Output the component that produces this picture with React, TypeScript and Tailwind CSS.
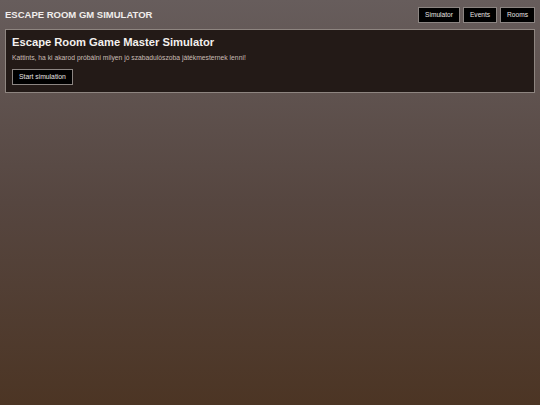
import React from "react";

const navItems = ["Simulator", "Events", "Rooms"];

const NavButton: React.FC<{ label: string }> = ({ label }) => (
  <button className="h-4 px-[6px] bg-black border border-[#8c8582] text-[6.6px] leading-none text-[#e8e4e2]">
    {label}
  </button>
);

const App: React.FC = () => {
  return (
    <div
      className="min-h-screen w-full bg-gradient-to-b from-[#675d5c] via-[#564640] to-[#4c3524] text-white"
      style={{ fontFamily: '"Liberation Sans", Arial, sans-serif' }}
    >
      <header className="flex items-center justify-between pl-[5px] pr-[5px] pt-[7px]">
        <h1 className="text-[9.5px] font-bold text-[#f1eeec]">ESCAPE ROOM GM SIMULATOR</h1>
        <nav className="flex gap-[3px]">
          {navItems.map((item) => (
            <NavButton key={item} label={item} />
          ))}
        </nav>
      </header>

      <main className="px-[5px] pt-[6px]">
        <section className="bg-[#231a17] border border-[#8e8580] px-[6px] pt-[5px] pb-[6px]">
          <h2 className="text-[11.2px] font-bold leading-[15px] text-[#f3f0ee]">Escape Room Game Master Simulator</h2>
          <p className="mt-[4px] text-[6.75px] leading-[8px] text-[#c9bdb6]">
            Kattints, ha ki akarod próbálni milyen jó szabadulószoba játékmesternek lenni!
          </p>
          <button className="mt-[5px] h-4 px-[6px] bg-black border border-[#8c8582] text-[6.8px] leading-none text-[#e8e4e2]">
            Start simulation
          </button>
        </section>
      </main>
    </div>
  );
};

export default App;
